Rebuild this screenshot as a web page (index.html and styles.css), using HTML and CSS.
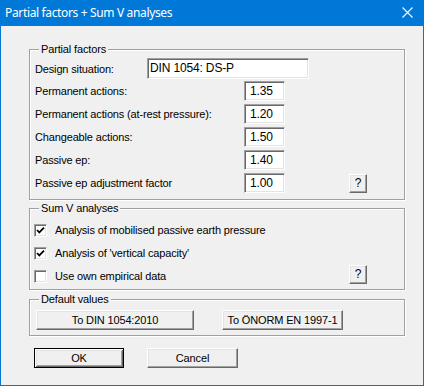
FILE: index.html
```html
<!DOCTYPE html>
<html lang="en">
<head>
    <meta charset="UTF-8">
    <meta name="viewport" content="width=device-width, initial-scale=1.0">
    <title>Partial factors + Sum V analyses</title>
    <link rel="stylesheet" href="styles.css">
</head>
<body>
    <div class="window">
        <div class="titlebar">
            <span class="title">Partial factors + Sum V analyses</span>
            <svg class="close" width="11" height="11" viewBox="0 0 11 11">
                <path d="M0.5 0.5 L10.5 10.5 M10.5 0.5 L0.5 10.5" stroke="#fff" stroke-width="1.1" fill="none"/>
            </svg>
        </div>

        <div class="client">
            <div class="group group-factors">
                <div class="group-title">Partial factors</div>
                <div class="row row-design">
                    <span class="label">Design situation:</span>
                    <div class="field field-wide">DIN 1054: DS-P</div>
                </div>
                <div class="row">
                    <span class="label">Permanent actions:</span>
                    <div class="field">1.35</div>
                </div>
                <div class="row">
                    <span class="label">Permanent actions (at-rest pressure):</span>
                    <div class="field">1.20</div>
                </div>
                <div class="row">
                    <span class="label">Changeable actions:</span>
                    <div class="field">1.50</div>
                </div>
                <div class="row">
                    <span class="label">Passive ep:</span>
                    <div class="field">1.40</div>
                </div>
                <div class="row">
                    <span class="label">Passive ep adjustment factor</span>
                    <div class="field">1.00</div>
                    <button class="btn btn-help">?</button>
                </div>
            </div>

            <div class="group group-sumv">
                <div class="group-title">Sum V analyses</div>
                <div class="check-row">
                    <span class="checkbox checked">
                        <svg width="11" height="11" viewBox="0 0 11 11"><path d="M2 5 L4.3 7.4 L9 2.6" stroke="#000" stroke-width="1.8" fill="none"/></svg>
                    </span>
                    <span class="check-label">Analysis of mobilised passive earth pressure</span>
                </div>
                <div class="check-row">
                    <span class="checkbox checked">
                        <svg width="11" height="11" viewBox="0 0 11 11"><path d="M2 5 L4.3 7.4 L9 2.6" stroke="#000" stroke-width="1.8" fill="none"/></svg>
                    </span>
                    <span class="check-label">Analysis of 'vertical capacity'</span>
                </div>
                <div class="check-row">
                    <span class="checkbox"></span>
                    <span class="check-label">Use own empirical data</span>
                    <button class="btn btn-help btn-help-up">?</button>
                </div>
            </div>

            <div class="group group-defaults">
                <div class="group-title">Default values</div>
                <div class="defaults-row">
                    <button class="btn btn-din">To DIN 1054:2010</button>
                    <button class="btn btn-onorm">To ÖNORM EN 1997-1</button>
                </div>
            </div>

            <div class="footer">
                <button class="btn btn-ok">OK</button>
                <button class="btn btn-cancel">Cancel</button>
            </div>
        </div>
    </div>
</body>
</html>
```

FILE: styles.css
```css
html, body {
    margin: 0;
    padding: 0;
    background-color: #f0f0f0;
}
.window {
    width: 424px;
    height: 386px;
    box-sizing: border-box;
    border: 1px solid #0078d7;
    border-top: none;
    background-color: #f0f0f0;
    font-family: "Liberation Sans", Arial, sans-serif;
    font-size: 11px;
    letter-spacing: -0.15px;
    color: #000;
}
.titlebar {
    height: 26px;
    background-color: #0078d7;
    display: flex;
    align-items: center;
    justify-content: space-between;
    padding: 0 10px 0 4px;
    color: #fff;
}
.title {
    font-family: "Noto Sans", "Open Sans", sans-serif;
    font-size: 12px;
    letter-spacing: -0.35px;
    margin-top: -1px;
}
.close {
    display: block;
    margin-top: -1px;
}
.client {
    padding: 23px 0 0 28px;
}
.group {
    width: 376px;
    box-sizing: border-box;
    border: 1px solid #a0a0a0;
    box-shadow: 1px 1px 0 #fff, inset 1px 1px 0 #fff;
    padding: 0 5px;
}
.group-title {
    width: fit-content;
    height: 13px;
    line-height: 13px;
    margin: -7px 0 0 4px;
    padding: 0 2px;
    background-color: #f0f0f0;
}
.group-factors {
    padding-bottom: 6px;
}
.row {
    display: flex;
    align-items: center;
    height: 20px;
    margin-bottom: 3px;
}
.row:last-child {
    margin-bottom: 0;
}
.row-design {
    height: 21px;
    margin-top: 2px;
    margin-bottom: 2px;
}
.label {
    width: 209px;
    flex: none;
}
.row-design .label {
    width: 112px;
}
.field {
    width: 41px;
    height: 20px;
    box-sizing: border-box;
    background-color: #fff;
    border: 1px solid;
    border-color: #a0a0a0 #fff #fff #a0a0a0;
    box-shadow: inset 1px 1px 0 #696969, inset -1px -1px 0 #e3e3e3;
    padding-left: 5px;
    line-height: 18px;
    font-size: 12px;
}
.field-wide {
    width: 162px;
    height: 21px;
    line-height: 19px;
    padding-left: 2px;
}
.btn {
    font-family: "Liberation Sans", Arial, sans-serif;
    font-size: 11px;
    letter-spacing: -0.15px;
    color: #000;
    height: 20px;
    padding: 0;
    box-sizing: border-box;
    background-color: #f0f0f0;
    border: 1px solid;
    border-color: #fff #696969 #696969 #fff;
    box-shadow: inset -1px -1px 0 #a0a0a0, inset 1px 1px 0 #e3e3e3;
    cursor: pointer;
}
.btn-help {
    width: 18px;
    height: 19px;
    margin-left: auto;
    margin-right: 32px;
    font-size: 12px;
}
.btn-help-up {
    margin-top: -4px;
}
.group-sumv {
    margin-top: 8px;
    padding-bottom: 3px;
}
.check-row {
    display: flex;
    align-items: center;
    height: 20px;
    margin-top: 3px;
}
.group-sumv .group-title + .check-row {
    margin-top: 5px;
}
.checkbox {
    width: 13px;
    height: 13px;
    box-sizing: border-box;
    flex: none;
    margin-left: -1px;
    background-color: #fff;
    border: 1px solid;
    border-color: #a0a0a0 #fff #fff #a0a0a0;
    box-shadow: inset 1px 1px 0 #696969, inset -1px -1px 0 #e3e3e3;
    display: flex;
    align-items: center;
    justify-content: center;
}
.checkbox svg {
    display: block;
}
.check-label {
    margin-left: 8px;
}
.group-defaults {
    margin-top: 9px;
    padding-bottom: 5px;
}
.defaults-row {
    display: flex;
    margin-top: 4px;
}
.btn-din {
    width: 158px;
    margin-left: 1px;
}
.btn-onorm {
    width: 121px;
    margin-left: 28px;
}
.footer {
    display: flex;
    margin-top: 12px;
}
.btn-ok {
    width: 90px;
    margin-left: 5px;
    border-color: #000;
    box-shadow: inset 1px 1px 0 #fff, inset -1px -1px 0 #696969, inset 2px 2px 0 #e3e3e3, inset -2px -2px 0 #a0a0a0;
}
.btn-cancel {
    width: 91px;
    margin-left: 23px;
}
```
